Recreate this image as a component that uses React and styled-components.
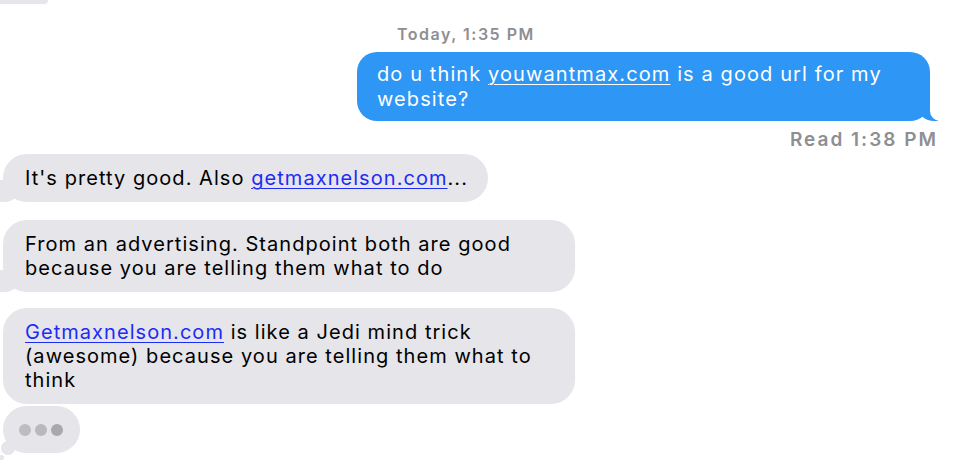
import React from "react";
import styled, { createGlobalStyle } from "styled-components";

const GlobalStyle = createGlobalStyle`
  html, body {
    margin: 0;
    padding: 0;
    background: #ffffff;
  }
  body {
    font-family: "Inter", "Liberation Sans", sans-serif;
    -webkit-font-smoothing: antialiased;
  }
`;

const Thread = styled.div`
  width: 958px;
  height: 466px;
  overflow: hidden;
  display: flex;
  flex-direction: column;
  padding: 0 20px 0 3px;
  box-sizing: border-box;
`;

const PrevBubbleEnd = styled.div`
  width: 48px;
  height: 4px;
  background: #e5e5ea;
  border-radius: 0 0 24px 6px;
  margin-left: -3px;
`;

const Stamp = styled.div`
  margin: 21px 0 0 394px;
  font-size: 16px;
  line-height: 18px;
  font-weight: 600;
  letter-spacing: 1.5px;
  color: #8e8e93;
`;

const Row = styled.div`
  display: flex;
  justify-content: ${(p) => (p.$mine ? "flex-end" : "flex-start")};
  margin-top: ${(p) => p.$gap || 0}px;
`;

const Bubble = styled.div`
  position: relative;
  max-width: ${(p) => (p.$mine ? 533 : 530)}px;
  padding: ${(p) => (p.$mine ? "10px 20px 10px 20px" : "12px 20px 12px 22px")};
  margin-right: ${(p) => (p.$mine ? 8 : 0)}px;
  border-radius: ${(p) => (p.$mine ? 20 : 24)}px;
  background: ${(p) => (p.$mine ? "#2e96f4" : "#e5e5ea")};
  color: ${(p) => (p.$mine ? "#ffffff" : "#000000")};
  font-size: 20px;
  line-height: ${(p) => (p.$mine ? 24.5 : 24)}px;
  letter-spacing: ${(p) => (p.$mine ? 1.1 : 1.05)}px;

  ${(p) =>
    p.$tail &&
    (p.$mine
      ? `
    &::before {
      content: "";
      position: absolute;
      bottom: 0;
      right: -8px;
      width: 20px;
      height: 22px;
      background: #2e96f4;
      border-bottom-left-radius: 16px 14px;
    }
    &::after {
      content: "";
      position: absolute;
      bottom: 0;
      right: -10px;
      width: 10px;
      height: 22px;
      background: #ffffff;
      border-bottom-left-radius: 10px;
    }
  `
      : `
    &::before {
      content: "";
      position: absolute;
      bottom: 0;
      left: -3px;
      width: 20px;
      height: 22px;
      background: #e5e5ea;
      border-bottom-right-radius: 16px 14px;
    }
    &::after {
      content: "";
      position: absolute;
      bottom: 0;
      left: -10px;
      width: 7px;
      height: 22px;
      background: #ffffff;
      border-bottom-right-radius: 8px;
    }
  `)}
`;

const Link = styled.a`
  color: ${(p) => (p.$mine ? "#ffffff" : "#1c2cf5")};
  text-decoration: underline;
  text-underline-offset: 3px;
  text-decoration-thickness: 1px;
`;

const Receipt = styled.div`
  align-self: flex-end;
  margin-top: 8px;
  font-size: 19px;
  line-height: 22px;
  font-weight: 600;
  letter-spacing: 2px;
  color: #8e8e93;
`;

const TypingBubble = styled.div`
  position: relative;
  width: 77px;
  height: 47px;
  margin-top: 2px;
  border-radius: 24px;
  background: #e5e5ea;
  display: flex;
  align-items: center;
  gap: 4px;
  padding-left: 16px;
  box-sizing: border-box;

  &::before {
    content: "";
    position: absolute;
    left: -2px;
    bottom: -2px;
    width: 14px;
    height: 14px;
    border-radius: 50%;
    background: #e5e5ea;
  }
  &::after {
    content: "";
    position: absolute;
    left: -4px;
    bottom: -7px;
    width: 5px;
    height: 5px;
    border-radius: 50%;
    background: #e5e5ea;
  }
`;

const Dot = styled.span`
  width: 12px;
  height: 12px;
  border-radius: 50%;
  background: ${(p) => p.$tone};
`;

export default function App() {
  return (
    <>
      <GlobalStyle />
      <Thread>
        <PrevBubbleEnd />
        <Stamp>Today, 1:35 PM</Stamp>
        <Row $mine $gap={9}>
          <Bubble $mine $tail>
            do u think <Link $mine>youwantmax.com</Link> is a good url for my website?
          </Bubble>
        </Row>
        <Receipt>Read 1:38 PM</Receipt>
        <Row $gap={3}>
          <Bubble $tail>
            It's pretty good. Also <Link>getmaxnelson.com</Link>...
          </Bubble>
        </Row>
        <Row $gap={18}>
          <Bubble $tail>
            From an advertising. Standpoint both are good because you are telling them what to do
          </Bubble>
        </Row>
        <Row $gap={16}>
          <Bubble>
            <Link>Getmaxnelson.com</Link> is like a Jedi mind trick (awesome) because you are
            telling them what to think
          </Bubble>
        </Row>
        <TypingBubble>
          <Dot $tone="#bdbdc1" />
          <Dot $tone="#b9b9bd" />
          <Dot $tone="#a9a9ad" />
        </TypingBubble>
      </Thread>
    </>
  );
}
